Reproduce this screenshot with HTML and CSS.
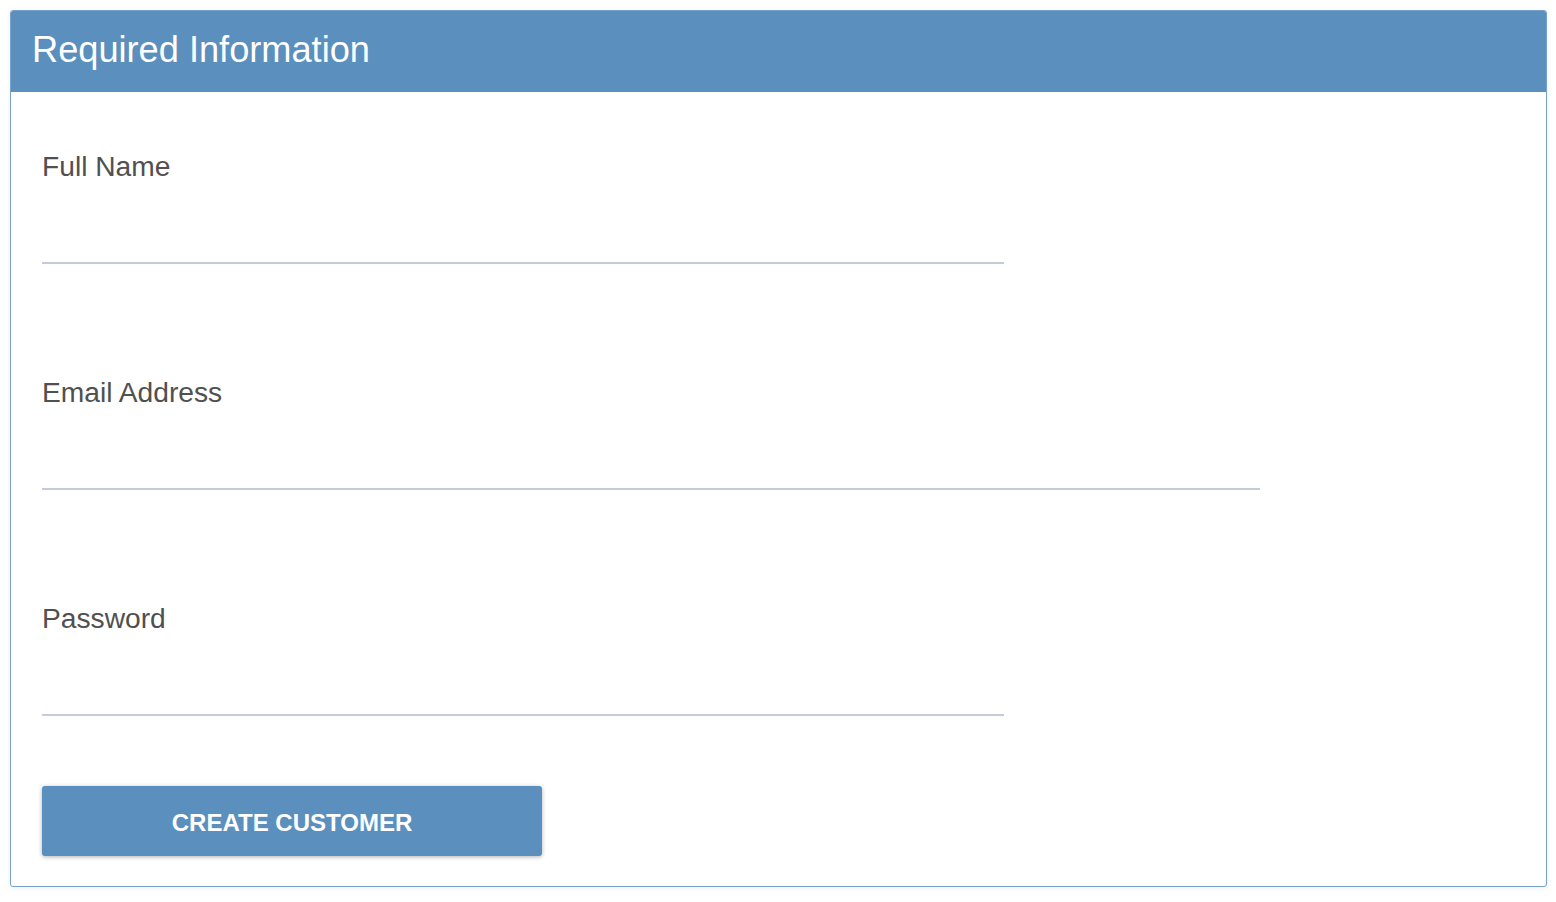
FILE: index.html
```html
<!DOCTYPE html>
<html lang="en">
<head>
<meta charset="utf-8">
<title>Required Information</title>
<link rel="stylesheet" href="styles.css">
</head>
<body>
  <section class="card">
    <header class="card-header">
      <h2 class="card-title">Required Information</h2>
    </header>
    <form class="card-body">
      <div class="field">
        <label class="field-label" for="name">Full Name</label>
        <input class="field-input field-input--md" id="name" type="text">
      </div>
      <div class="field">
        <label class="field-label" for="email">Email Address</label>
        <input class="field-input field-input--lg" id="email" type="email">
      </div>
      <div class="field">
        <label class="field-label" for="password">Password</label>
        <input class="field-input field-input--md" id="password" type="password">
      </div>
      <button class="btn-primary" type="button">CREATE CUSTOMER</button>
    </form>
  </section>
</body>
</html>
```

FILE: styles.css
```css
* { box-sizing: border-box; }

html, body {
  margin: 0;
  background: #ffffff;
}

body {
  padding: 10px 9px 14px 10px;
  font-family: "Liberation Sans", Arial, Helvetica, sans-serif;
}

.card {
  border: 1px solid #76a3cd;
  border-radius: 3px;
  background: #ffffff;
  box-shadow: 0 1px 5px rgba(0, 0, 0, 0.07);
  overflow: hidden;
}

.card-header {
  background: #5a8fbe;
  padding: 18px 20px 20px 21px;
  height: 81px;
}

.card-title {
  margin: 0;
  color: #ffffff;
  font-weight: normal;
  font-size: 36.2px;
  line-height: 42px;
}

.card-body {
  display: flex;
  flex-direction: column;
  align-items: flex-start;
  padding: 58px 31px 30px;
  margin: 0;
}

.field {
  display: flex;
  flex-direction: column;
  margin-bottom: 112px;
}

.field:nth-of-type(3) {
  margin-bottom: 70px;
}

.field-label {
  color: #505050;
  font-size: 28.2px;
  line-height: 32px;
}

.field-input {
  height: 82px;
  border: 0;
  border-bottom: 2px solid #c5ccd9;
  background: transparent;
  padding: 0;
  font: inherit;
  font-size: 27px;
  outline: none;
}

.field-input--md { width: 962px; }
.field-input--lg { width: 1218px; }

.btn-primary {
  width: 500px;
  height: 70px;
  border: 0;
  border-radius: 3px;
  background: #5a8fbe;
  color: #ffffff;
  font-family: "Liberation Sans", Arial, Helvetica, sans-serif;
  font-weight: bold;
  font-size: 24px;
  padding: 4px 0 0;
  box-shadow: 0 1px 4px rgba(0, 0, 0, 0.3);
  cursor: pointer;
}
```
